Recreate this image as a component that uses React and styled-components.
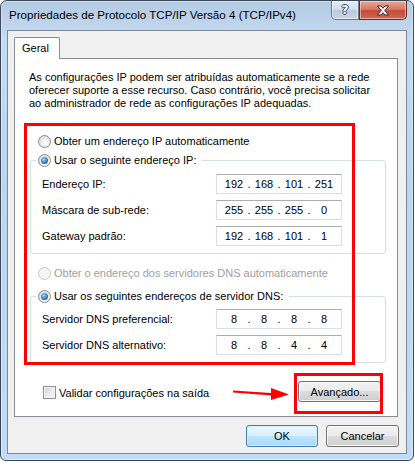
import { Fragment } from "react";
import styled, { createGlobalStyle } from "styled-components";

const GlobalStyle = createGlobalStyle`
  body {
    margin: 0;
    background: #ffffff;
    font-family: "Liberation Sans", Arial, sans-serif;
    font-size: 11px;
    color: #000000;
  }
`;

const ipRows = [
  { label: "Endereço IP:", value: ["192", "168", "101", "251"] },
  { label: "Máscara de sub-rede:", value: ["255", "255", "255", "0"] },
  { label: "Gateway padrão:", value: ["192", "168", "101", "1"] },
];

const dnsRows = [
  { label: "Servidor DNS preferencial:", value: ["8", "8", "8", "8"] },
  { label: "Servidor DNS alternativo:", value: ["8", "8", "4", "4"] },
];

const Window = styled.div`
  width: 414px;
  height: 461px;
  box-sizing: border-box;
  border: 1px solid #3b4857;
  border-radius: 7px 7px 6px 6px;
  background: linear-gradient(180deg, #b3cae3 0%, #c4dbf2 8%, #bcd6f1 40%, #c2dcf6 100%);
  box-shadow: inset 0 0 0 1px rgba(255, 255, 255, 0.4);
  padding: 0 6px 6px;
  display: flex;
  flex-direction: column;
`;

const TitleBar = styled.div`
  height: 29px;
  display: flex;
  align-items: flex-start;
  justify-content: space-between;
`;

const Title = styled.div`
  margin-top: 6px;
  padding-left: 2px;
  font-size: 11.6px;
  line-height: 16px;
  color: #000000;
`;

const Captions = styled.div`
  display: flex;
`;

const CaptionButton = styled.div`
  width: ${(p) => p.$w}px;
  height: 19px;
  box-sizing: border-box;
  border: 1px solid ${(p) => (p.$close ? "#6b2b24" : "#6d7b8c")};
  border-top: none;
  border-radius: ${(p) => (p.$close ? "0 0 5px 0" : "0 0 0 5px")};
  background: ${(p) =>
    p.$close
      ? "linear-gradient(180deg, #e9a797 0%, #d97a66 45%, #c4493a 55%, #d06a52 100%)"
      : "linear-gradient(180deg, #e6edf5 0%, #d3dfeb 45%, #bccbdb 55%, #c9d7e6 100%)"};
  box-shadow: inset 0 0 0 1px rgba(255, 255, 255, 0.45);
  display: flex;
  align-items: center;
  justify-content: center;
  color: #ffffff;
  font-family: "DejaVu Sans", sans-serif;
  font-weight: 700;
  font-size: 12px;
  text-shadow: 1px 0 #3c4858, -1px 0 #3c4858, 0 1px #3c4858, 0 -1px #3c4858;
`;

const Client = styled.div`
  flex: 1;
  border: 1px solid #7a8797;
  background: #f0f0f0;
  padding: 6px 8px 6px 6px;
  display: flex;
  flex-direction: column;
`;

const TabStrip = styled.div`
  display: flex;
`;

const Tab = styled.div`
  position: relative;
  z-index: 1;
  width: 46px;
  height: 22px;
  box-sizing: border-box;
  margin-bottom: -1px;
  padding: 3px 0 0 7px;
  border: 1px solid #898c95;
  border-bottom: none;
  border-radius: 2px 2px 0 0;
  background: #ffffff;
  line-height: 14px;
`;

const Panel = styled.div`
  position: relative;
  flex: 1;
  border: 1px solid #898c95;
  background: #ffffff;
  padding: 12px 11px 14px 15px;
  display: flex;
  flex-direction: column;
`;

const Description = styled.p`
  margin: 0 0 0 -1px;
  line-height: 13px;
`;

const OptionRow = styled.div`
  display: flex;
  align-items: center;
  gap: 3px;
  height: 16px;
  margin-top: ${(p) => p.$top}px;
  margin-left: 8px;
  color: ${(p) => (p.$disabled ? "#a0a0a0" : "#000000")};
`;

const Radio = styled.span`
  width: 13px;
  height: 13px;
  box-sizing: border-box;
  flex-shrink: 0;
  border-radius: 50%;
  border: 1px solid ${(p) => (p.$disabled ? "#c8c8c8" : "#8b8c8c")};
  background: ${(p) =>
    p.$disabled
      ? "#f5f5f5"
      : "radial-gradient(circle at 60% 65%, #ffffff 0%, #f1f1f1 35%, #cfcfcf 100%)"};
  display: flex;
  align-items: center;
  justify-content: center;

  &::after {
    content: "";
    display: ${(p) => (p.$checked ? "block" : "none")};
    width: 7px;
    height: 7px;
    border-radius: 50%;
    background: radial-gradient(circle at 40% 35%, #a9dcfb 0%, #3f8dcb 45%, #133f6b 100%);
  }
`;

const Group = styled.div`
  margin-top: ${(p) => p.$top}px;
  border: 1px solid #d5dfe5;
  border-radius: 3px;
  padding: 0 0 7px 11px;
`;

const Legend = styled.div`
  display: flex;
  align-items: center;
  gap: 3px;
  width: fit-content;
  height: 16px;
  margin: -9px 0 0 -6px;
  padding: 0 6px 0 2px;
  background: #ffffff;
`;

const Fields = styled.div`
  display: grid;
  grid-template-columns: 174px 126px;
  grid-auto-rows: 20px;
  row-gap: 6px;
  align-items: center;
  margin-top: ${(p) => p.$top}px;
`;

const IpBox = styled.div`
  height: 20px;
  box-sizing: border-box;
  padding: 0 6px;
  border: 1px solid #dadde6;
  border-top-color: #abadb3;
  background: #ffffff;
  display: grid;
  grid-template-columns: 1fr 8px 1fr 8px 1fr 8px 1fr;
  align-items: center;
  text-align: center;
`;

const BottomRow = styled.div`
  display: flex;
  align-items: center;
  justify-content: space-between;
  margin-top: 18px;
  padding: 0 5px 0 13px;
`;

const CheckLabel = styled.label`
  display: flex;
  align-items: center;
  gap: 3px;
  margin-top: 2px;
`;

const CheckBox = styled.span`
  width: 13px;
  height: 13px;
  box-sizing: border-box;
  border: 1px solid #8e8f8f;
  background: linear-gradient(135deg, #cbcfd5 0%, #e9e9e9 50%, #f6f6f6 100%);
  box-shadow: inset 0 0 0 1px #f4f4f4;
`;

const Button = styled.button`
  width: ${(p) => p.$w}px;
  height: ${(p) => p.$h}px;
  box-sizing: border-box;
  padding: 0;
  font-family: "Liberation Sans", Arial, sans-serif;
  font-size: 11px;
  color: #000000;
  border: 1px solid ${(p) => (p.$primary ? "#3c7fb1" : "#707070")};
  border-radius: 3px;
  background: ${(p) =>
    p.$primary
      ? "linear-gradient(180deg, #eaf6fd 0%, #d9f0fc 50%, #bee6fd 50%, #a7d9f5 100%)"
      : "linear-gradient(180deg, #f2f2f2 0%, #ebebeb 50%, #dddddd 50%, #cfcfcf 100%)"};
  box-shadow: inset 0 0 0 1px ${(p) => (p.$primary ? "rgba(214, 240, 253, 0.9)" : "rgba(255, 255, 255, 0.8)")};
`;

const ButtonBar = styled.div`
  display: flex;
  justify-content: flex-end;
  gap: 8px;
  margin: 8px -1px 0 0;
`;

const Highlight = styled.div`
  position: absolute;
  left: ${(p) => p.$x}px;
  top: ${(p) => p.$y}px;
  width: ${(p) => p.$w}px;
  height: ${(p) => p.$h}px;
  box-sizing: border-box;
  border: 3px solid #ff0000;
  pointer-events: none;
`;

const Arrow = styled.svg`
  position: absolute;
  left: 218px;
  top: 326px;
`;

const IpAddress = ({ parts }) => (
  <IpBox>
    {parts.map((part, i) => (
      <Fragment key={i}>
        {i > 0 && <span>.</span>}
        <span>{part}</span>
      </Fragment>
    ))}
  </IpBox>
);

const FieldList = ({ rows, top }) => (
  <Fields $top={top}>
    {rows.map((row) => (
      <Fragment key={row.label}>
        <span>{row.label}</span>
        <IpAddress parts={row.value} />
      </Fragment>
    ))}
  </Fields>
);

const App = () => {
  return (
    <>
      <GlobalStyle />
      <Window>
        <TitleBar>
          <Title>Propriedades de Protocolo TCP/IP Versão 4 (TCP/IPv4)</Title>
          <Captions>
            <CaptionButton $w={28}>?</CaptionButton>
            <CaptionButton $w={48} $close>
              <svg width="14" height="11" viewBox="0 0 14 11">
                <path
                  d="M1.5 1 H5 L7 3.3 L9 1 H12.5 L8.8 5.5 L12.5 10 H9 L7 7.7 L5 10 H1.5 L5.2 5.5 Z"
                  fill="#ffffff"
                  stroke="#3a2522"
                  strokeWidth="1"
                  strokeLinejoin="round"
                />
              </svg>
            </CaptionButton>
          </Captions>
        </TitleBar>
        <Client>
          <TabStrip>
            <Tab>Geral</Tab>
          </TabStrip>
          <Panel>
            <Description>
              As configurações IP podem ser atribuídas automaticamente se a rede
              <br />
              oferecer suporte a esse recurso. Caso contrário, você precisa solicitar
              <br />
              ao administrador de rede as configurações IP adequadas.
            </Description>

            <OptionRow $top={23}>
              <Radio />
              Obter um endereço IP automaticamente
            </OptionRow>
            <Group $top={11}>
              <Legend>
                <Radio $checked />
                Usar o seguinte endereço IP:
              </Legend>
              <FieldList rows={ipRows} top={6} />
            </Group>

            <OptionRow $top={11} $disabled>
              <Radio $disabled />
              Obter o endereço dos servidores DNS automaticamente
            </OptionRow>
            <Group $top={15}>
              <Legend>
                <Radio $checked />
                Usar os seguintes endereços de servidor DNS:
              </Legend>
              <FieldList rows={dnsRows} top={5} />
            </Group>

            <BottomRow>
              <CheckLabel>
                <CheckBox />
                Validar configurações na saída
              </CheckLabel>
              <Button $w={83} $h={21}>Avançado...</Button>
            </BottomRow>

            <Highlight $x={9} $y={64} $w={331} $h={242} />
            <Highlight $x={279} $y={314} $w={89} $h={41} />
            <Arrow width="60" height="18" viewBox="0 0 60 18">
              <path d="M0 5.5 L42 8.2 L42 10.8 L0 7.5 Z" fill="#ff0000" />
              <polygon points="38,3 56,9.5 38,15" fill="#ff0000" />
            </Arrow>
          </Panel>
          <ButtonBar>
            <Button $w={72} $h={22} $primary>OK</Button>
            <Button $w={73} $h={22}>Cancelar</Button>
          </ButtonBar>
        </Client>
      </Window>
    </>
  );
};

export default App;
